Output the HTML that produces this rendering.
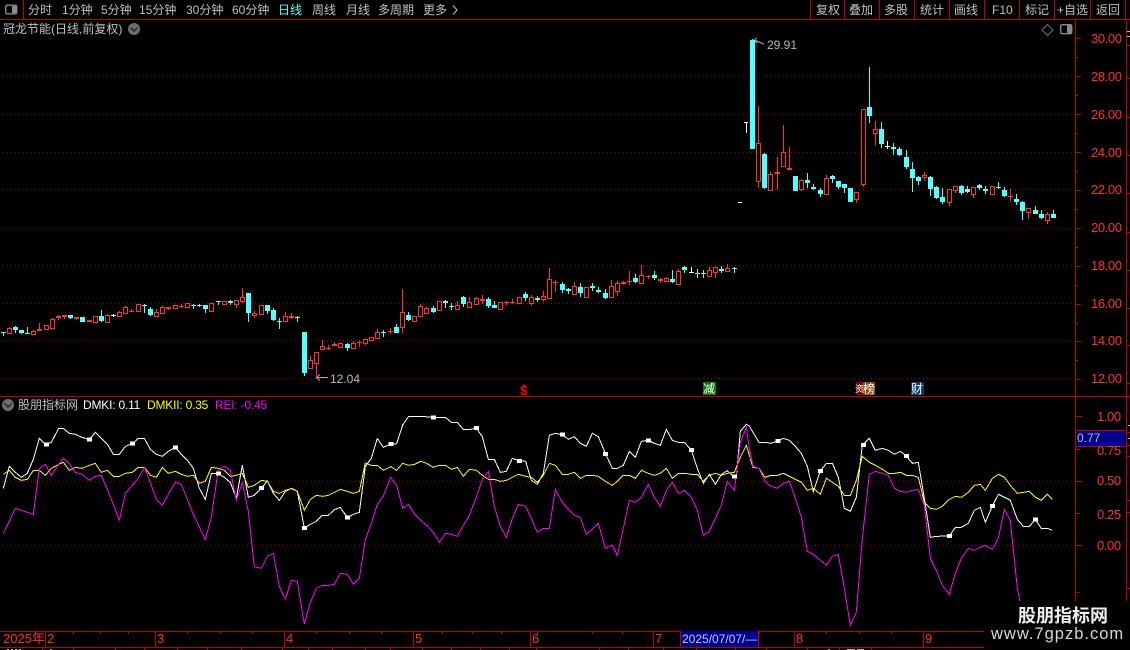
<!DOCTYPE html>
<html>
<head>
<meta charset="utf-8">
<style>
html,body{margin:0;padding:0;background:#000;width:1130px;height:650px;overflow:hidden}
#r{position:relative;width:1130px;height:650px;background:#000;overflow:hidden;font-family:"Liberation Sans","WenQuanYi Zen Hei","Noto Sans CJK SC",sans-serif;font-size:12px;color:#c0c0c0}
#r span.t{position:absolute;white-space:nowrap;line-height:14px;height:14px}
svg{position:absolute;left:0;top:0}
.a{color:#ff3232;font-size:13px;letter-spacing:-.4px}
.d{color:#ff3232;font-size:13px}
</style>
</head>
<body>
<div id="r">
<svg id="s" width="1130" height="650" viewBox="0 0 1130 650">
<g stroke="#a50000" stroke-width="1" fill="none" stroke-dasharray="1 3" shape-rendering="crispEdges">
<path d="M3 76.5H1074M3 114.5H1074M3 152.5H1074M3 189.5H1074M3 228.5H1074M3 265.5H1074M3 303.5H1074M3 340.5H1074M3 378.5H1074M3 481.5H1074M3 545.5H1074"/>
</g>
<g stroke="#c00000" stroke-width="1" fill="none" shape-rendering="crispEdges">
<path d="M0 19.5H1130M23.5 0V19M810.5 0V19M844.5 0V19M879.5 0V19M914.5 0V19M949.5 0V19M984.5 0V19M1019.5 0V19M1054.5 0V19M1090.5 0V19M1125.5 0V19"/>
<path d="M0 396.5H1130M1075.5 20V650M1126.5 20V650"/>
<path d="M1075 38.5h6M1075 57.5h3M1075 76.5h6M1075 95.5h3M1075 114.5h6M1075 133.5h3M1075 152.5h6M1075 171.5h3M1075 190.5h6M1075 209.5h3M1075 228.5h6M1075 247.5h3M1075 266.5h6M1075 285.5h3M1075 304.5h6M1075 323.5h3M1075 341.5h6M1075 360.5h3M1075 379.5h6"/>
<path d="M1076 416.5h6M1076 449.5h4M1076 481.5h6M1076 513.5h4M1076 545.5h6M1076 592.5h4"/>
<path d="M1126 45.5h4M1126 78.5h4M1126 117.5h4M1126 155.5h4M1126 193.5h4M1126 232.5h4M1126 270.5h4M1126 308.5h4M1126 345.5h4M1126 383.5h4M1126 432.5h4M1126 445.5h4M1126 456.5h4M1126 500.5h4M1126 512.5h4M1126 588.5h4"/>
<path d="M0 631.5H984M0 647.5H984M45.5 631V647M155.5 631V647M284.5 631V647M413.5 631V647M530.5 631V647M653.5 631V647M794.5 631V647M923.5 631V647"/>
<path d="M73.5 631v3M100.5 631v3M128.5 631v3M187.5 631v3M220.5 631v3M252.5 631v3M316.5 631v3M349.5 631v3M381.5 631v3M442.5 631v3M472.5 631v3M501.5 631v3M537.5 631v3M592.5 631v3M622.5 631v3M759.5 631v3M826.5 631v3M859.5 631v3M891.5 631v3"/>
<path d="M42.5 647v3M73.5 647v3M115.5 647v3M144.5 647v3M177.5 647v3M207.5 647v3M241.5 647v3M282.5 647v3M308.5 647v3M332.5 647v3M365.5 647v3M390.5 647v3M422.5 647v3M451.5 647v3M480.5 647v3M509.5 647v3M536.5 647v3M599.5 647v3M628.5 647v3M663.5 647v3M696.5 647v3M735.5 647v3M766.5 647v3M807.5 647v3M839.5 647v3M871.5 647v3"/>
</g>
<g fill="#bbb" shape-rendering="crispEdges">
<rect x="1127" y="31" width="3" height="1"/><rect x="1127" y="36" width="3" height="1"/>
<rect x="1128" y="425" width="2" height="1"/><rect x="1128" y="438" width="2" height="1"/>
<rect x="7" y="649" width="2" height="1"/><rect x="11" y="649" width="2" height="1"/><rect x="15" y="649" width="2" height="1"/><rect x="19" y="649" width="2" height="1"/><rect x="50" y="649" width="2" height="1"/><rect x="828" y="649" width="2" height="1"/><rect x="847" y="649" width="8" height="1"/><rect x="857" y="649" width="7" height="1"/>
</g>
<!-- panel icons -->
<g fill="none" stroke="#8a8a8a" stroke-width="1.4">
<rect x="5.7" y="5.2" width="11" height="8.6" rx="1.5"/>
<rect x="1060.7" y="24.7" width="11" height="9" rx="1.5"/>
</g>
<rect x="12" y="6" width="4" height="7" fill="#8a8a8a"/>
<rect x="1067" y="25.5" width="4" height="7.5" fill="#8a8a8a"/>
<path d="M1047.5 24.5L1053 30L1047.5 35.5L1042 30Z" fill="none" stroke="#777" stroke-width="1"/>
<circle cx="134" cy="29" r="6" fill="#6e6e6e"/><path d="M130.5 27.5L134 31L137.5 27.5" fill="none" stroke="#222" stroke-width="1.4"/>
<circle cx="8" cy="405" r="6" fill="#6e6e6e"/><path d="M4.5 403.5L8 407L11.5 403.5" fill="none" stroke="#222" stroke-width="1.4"/>
<path d="M453 5.5L457 10L453 14.5" fill="none" stroke="#c0c0c0" stroke-width="1"/>
<!-- price annotation arrows -->
<path d="M754 40L764 44M754 40l3 -2M754 40l3 3" fill="none" stroke="#b0b0b0" stroke-width="1"/>
<path d="M316 377.5H328M316 377.5l4 -3M316 377.5l4 3" fill="none" stroke="#b0b0b0" stroke-width="1"/>
<rect x="744" y="122" width="4" height="1" fill="#fff"/><rect x="746" y="122" width="1" height="11" fill="#fff"/>
<rect x="738" y="202" width="4" height="1" fill="#fff"/>
<g id="c"></g>
<!-- indicators -->
<g fill="none" stroke-width="1" shape-rendering="crispEdges">
<g transform="translate(0,395) scale(.33333)">
<polyline vector-effect="non-scaling-stroke" stroke="#fff" points="10,280 28,214 46,232 64,247 82,235 100,193 118,130 136,148 154,142 176,100 190,100 208,115 226,118 246,127 268,134 286,112 304,130 322,148 340,178 358,178 376,154 397,146 415,130 433,130 451,163 469,178 487,184 505,169 526,157 544,178 562,196 580,220 598,280 616,313 634,235 655,236 673,247 691,262 709,310 727,211 745,307 763,301 784,280 802,258 820,295 838,316 856,289 874,280 892,289 913,399 931,388 949,379 967,361 985,361 1003,344 1021,337 1042,368 1060,358 1078,352 1096,214 1114,190 1132,130"/>
<polyline vector-effect="non-scaling-stroke" stroke="#ffff00" points="10,238 28,226 46,247 64,256 82,253 100,226 118,226 136,241 154,220 176,208 190,202 208,226 226,217 246,220 268,211 286,205 304,232 322,226 340,244 358,244 376,235 397,232 415,217 433,217 451,241 469,247 487,217 505,235 526,229 544,238 562,244 580,241 598,265 616,259 634,217 655,220 673,226 691,244 709,241 727,235 745,277 763,271 784,256 802,259 820,289 838,295 856,286 874,281 892,289 913,346 931,313 949,301 967,304 985,301 1003,292 1021,283 1042,289 1060,295 1078,289 1096,204 1114,211 1132,211"/>
<polyline vector-effect="non-scaling-stroke" stroke="#ff00ff" points="10,415 28,378 46,340 64,346 82,352 100,358 118,220 136,208 154,241 176,208 190,190 208,205 226,232 246,238 268,256 286,244 304,241 322,283 340,328 358,376 376,295 397,271 415,250 433,217 451,262 469,313 487,331 505,298 526,262 544,268 562,313 580,358 598,396 616,433 634,367 655,223 673,214 691,226 709,316 727,262 745,349 763,515 784,520 802,484 820,475 838,574 856,613 874,556 892,559 913,687 931,622 949,580 967,571 985,571 1003,568 1021,535 1042,538 1060,568 1078,550 1096,433 1114,385 1132,328"/>
<g fill="#fff" stroke="none"><rect x="132" y="143" width="15" height="12"/><rect x="261" y="128" width="15" height="12"/><rect x="390" y="140" width="15" height="12"/><rect x="519" y="151" width="15" height="12"/><rect x="648" y="230" width="15" height="12"/><rect x="777" y="273" width="15" height="12"/><rect x="906" y="393" width="15" height="12"/><rect x="1035" y="362" width="15" height="12"/></g>
</g>
<g transform="translate(370,400) scale(.33333)">
<polyline vector-effect="non-scaling-stroke" stroke="#fff" points="22,115 40,142 58,134 80,131 98,75 116,49 134,49 152,49 190,52 226,52 244,67 262,67 280,88 302,88 319,84 337,110 355,178 373,178 391,217 409,214 427,175 445,182 467,184 484,241 502,253 520,220 538,106 556,100 577,104 595,118 613,110 631,130 649,139 667,100 685,110 706,160 727,205 742,205 760,196 778,154 796,172 814,124 835,121 853,130 871,136 889,88 907,121 925,127 943,127 964,150 982,205 1000,250 1018,223 1036,253 1054,223 1072,212 1093,232 1099,232 1111,94 1129,73 1140,79"/>
<polyline vector-effect="non-scaling-stroke" stroke="#ffff00" points="22,196 40,211 62,200 80,211 98,190 116,196 134,193 152,184 170,190 190,202 208,196 226,196 244,208 262,202 280,229 298,208 319,211 337,226 355,238 373,238 391,244 409,241 427,232 445,223 467,229 484,232 502,247 520,226 538,190 556,196 577,223 595,223 613,217 631,235 649,226 667,226 685,229 706,244 727,256 742,244 760,226 778,226 796,235 814,211 835,220 853,226 871,220 889,205 907,235 925,220 943,220 964,223 982,223 1000,244 1018,226 1036,220 1054,226 1072,220 1093,217 1111,172 1129,136 1140,172"/>
<polyline vector-effect="non-scaling-stroke" stroke="#ff00ff" points="22,313 40,288 62,232 80,256 98,325 116,313 134,343 152,361 170,376 190,397 208,427 226,400 244,403 262,409 280,376 298,346 319,292 337,238 355,214 373,319 391,379 409,412 427,355 445,313 467,319 484,355 502,397 520,385 538,385 556,268 577,307 595,328 613,346 631,352 649,403 667,388 685,370 706,445 727,436 742,466 760,385 778,301 796,307 814,292 835,253 853,292 871,319 889,271 907,247 925,280 943,271 964,292 982,331 1000,406 1018,394 1036,355 1054,316 1072,244 1093,271 1111,127 1129,82 1140,160"/>
<g fill="#fff" stroke="none"><rect x="55" y="126" width="15" height="12"/><rect x="183" y="46" width="15" height="12"/><rect x="312" y="78" width="15" height="12"/><rect x="441" y="177" width="15" height="12"/><rect x="570" y="98" width="15" height="12"/><rect x="699" y="156" width="15" height="12"/><rect x="828" y="116" width="15" height="12"/><rect x="957" y="144" width="15" height="12"/><rect x="1086" y="224" width="15" height="12"/></g>
</g>
<g transform="translate(750,395) scale(.33333)">
<polyline vector-effect="non-scaling-stroke" stroke="#fff" points="0,97 27,142 45,142 63,145 83,138 100,130 118,136 136,154 154,175 172,214 190,290 211,228 229,205 247,205 265,247 283,340 301,349 319,307 337,150 358,130 376,166 397,160 415,166 433,178 451,169 469,183 487,205 505,202 523,310 541,427 559,424 598,423 616,397 634,397 655,385 673,346 691,337 706,382 727,333 745,298 763,307 781,316 802,373 820,394 838,394 856,373 874,400 892,400 907,406"/>
<polyline vector-effect="non-scaling-stroke" stroke="#ffff00" points="0,190 9,217 27,220 45,247 63,241 83,241 100,235 118,244 136,253 154,262 172,286 190,280 211,298 229,250 247,262 265,274 283,301 301,301 319,256 337,184 358,202 376,211 397,223 415,235 433,235 451,232 469,241 487,241 505,247 523,322 541,340 559,343 577,334 598,313 616,304 634,307 655,292 673,271 691,268 706,286 727,250 745,238 763,247 781,271 802,295 820,292 838,289 856,307 874,316 892,298 907,313"/>
<polyline vector-effect="non-scaling-stroke" stroke="#ff00ff" points="0,166 9,214 27,220 45,259 63,274 83,280 100,265 118,259 136,310 154,367 172,469 190,478 229,511 247,484 265,478 283,580 301,691 319,652 337,430 358,238 376,229 397,235 415,241 433,280 451,289 469,292 487,286 505,283 523,331 541,490 559,526 577,571 598,598 616,535 634,490 655,460 673,466 691,457 706,451 727,463 745,430 763,343 781,376 802,580 810,620"/>
<g fill="#fff" stroke="none"><rect x="76" y="132" width="15" height="12"/><rect x="204" y="222" width="15" height="12"/><rect x="333" y="144" width="15" height="12"/><rect x="462" y="177" width="15" height="12"/><rect x="591" y="417" width="15" height="12"/><rect x="720" y="327" width="15" height="12"/><rect x="849" y="367" width="15" height="12"/></g>
</g>
</g>
<!-- small signal badges -->
<rect x="703" y="382" width="13" height="13" fill="#0a7a0a"/>
<rect x="856" y="382" width="7" height="13" fill="#7a0a0a"/>
<rect x="863" y="382" width="12" height="13" fill="#8a4a0a"/>
<rect x="911" y="382" width="13" height="13" fill="#0a3a70"/>
<path d="M524 384l2.5 3h-5z" fill="#ff0000"/>
<rect x="680" y="631" width="79" height="16" fill="#000090"/>
<path d="M680.5 631V647M758.5 631V647" stroke="#c00000" fill="none"/>
<rect x="1077" y="430" width="48" height="16" fill="#00008b"/>
<path d="M1076 430.5H1126M1076 446.5H1126" stroke="#c00000" fill="none"/>
<!-- watermark -->
<rect x="984" y="601" width="146" height="49" fill="#000"/>
</svg>

<span class="t" style="left:28px;top:3px">分时</span>
<span class="t" style="left:62px;top:3px">1分钟</span>
<span class="t" style="left:101px;top:3px">5分钟</span>
<span class="t" style="left:139px;top:3px">15分钟</span>
<span class="t" style="left:186px;top:3px">30分钟</span>
<span class="t" style="left:232px;top:3px">60分钟</span>
<span class="t" style="left:278px;top:3px;color:#54ffff">日线</span>
<span class="t" style="left:312px;top:3px">周线</span>
<span class="t" style="left:346px;top:3px">月线</span>
<span class="t" style="left:378px;top:3px">多周期</span>
<span class="t" style="left:423px;top:3px">更多</span>

<span class="t" style="left:816px;top:3px">复权</span>
<span class="t" style="left:849px;top:3px">叠加</span>
<span class="t" style="left:884px;top:3px">多股</span>
<span class="t" style="left:920px;top:3px">统计</span>
<span class="t" style="left:954px;top:3px">画线</span>
<span class="t" style="left:992px;top:3px">F10</span>
<span class="t" style="left:1025px;top:3px">标记</span>
<span class="t" style="left:1057px;top:3px">+自选</span>
<span class="t" style="left:1096px;top:3px">返回</span>

<span class="t" style="left:3px;top:22px">冠龙节能(日线,前复权)</span>

<span class="t" style="left:767px;top:38px;font-size:12px;color:#b8b8b8">29.91</span>
<span class="t" style="left:330px;top:372px;font-size:12px;color:#b8b8b8">12.04</span>

<span class="t a" style="left:1091px;top:32px">30.00</span>
<span class="t a" style="left:1091px;top:70px">28.00</span>
<span class="t a" style="left:1091px;top:108px">26.00</span>
<span class="t a" style="left:1091px;top:146px">24.00</span>
<span class="t a" style="left:1091px;top:183px">22.00</span>
<span class="t a" style="left:1091px;top:221px">20.00</span>
<span class="t a" style="left:1091px;top:259px">18.00</span>
<span class="t a" style="left:1091px;top:297px">16.00</span>
<span class="t a" style="left:1091px;top:334px">14.00</span>
<span class="t a" style="left:1091px;top:372px">12.00</span>

<span class="t a" style="left:1097px;top:410px">1.00</span>
<span class="t a" style="left:1097px;top:444px">0.75</span>
<span class="t a" style="left:1097px;top:474px">0.50</span>
<span class="t a" style="left:1097px;top:508px">0.25</span>
<span class="t a" style="left:1097px;top:539px">0.00</span>
<span class="t" style="left:1077px;top:431px;color:#b8b8e0">0.77</span>

<span class="t" style="left:18px;top:398px">股朋指标网</span>
<span class="t" style="left:83px;top:398px;color:#fff;letter-spacing:-.2px">DMKI: 0.11</span>
<span class="t" style="left:147px;top:398px;color:#ffff00;letter-spacing:-.2px">DMKII: 0.35</span>
<span class="t" style="left:215px;top:398px;color:#ff00ff;letter-spacing:-.2px">REI: -0.45</span>

<span class="t" style="left:520px;top:384px;color:#ff0000;font-weight:bold;font-size:13px">$</span>
<span class="t" style="left:703px;top:382px;color:#fff;font-size:12px">减</span>
<span class="t" style="left:855px;top:382px;color:#fff;font-size:9px">资</span>
<span class="t" style="left:863px;top:382px;color:#fff;font-size:12px">榜</span>
<span class="t" style="left:911px;top:382px;color:#fff;font-size:12px">财</span>

<span class="t d" style="left:3px;top:632px">2025年</span>
<span class="t d" style="left:47px;top:632px">2</span>
<span class="t d" style="left:157px;top:632px">3</span>
<span class="t d" style="left:286px;top:632px">4</span>
<span class="t d" style="left:415px;top:632px">5</span>
<span class="t d" style="left:532px;top:632px">6</span>
<span class="t d" style="left:655px;top:632px">7</span>
<span class="t d" style="left:796px;top:632px">8</span>
<span class="t d" style="left:925px;top:632px">9</span>
<span class="t" style="left:682px;top:632px;color:#c8c8f0">2025/07/07/—</span>

<span class="t" style="left:1018px;top:604px;height:22px;line-height:22px;font-size:18px;font-weight:bold;color:#f0f0f0;font-family:'Noto Sans CJK SC',sans-serif">股朋指标网</span>
<span class="t" style="left:991px;top:625px;height:18px;line-height:18px;font-size:16.5px;letter-spacing:1px;color:#d8d8d8">www.7gpzb.com</span>
</div>
<script>
var L=[
[0,280,[
[10,155,157,160,167,'c'],[28,141,145,158,161,'r'],[46,139,141,150,159,'c'],[64,150,150,159,162,'c'],[82,141,158,160,162,'c'],[100,150,154,161,164,'r'],[118,128,148,152,154,'R'],[139,135,136,146,147,'r'],[157,115,117,143,144,'r'],[175,104,107,113,120,'R'],[193,104,105,110,116,'R'],[211,105,105,113,117,'c'],[229,111,112,117,120,'R'],[247,111,111,125,126,'c'],[268,120,120,125,126,'R'],[286,108,108,125,126,'r'],[304,90,108,122,126,'c'],[322,101,105,125,129,'r'],[340,102,105,107,111,'w'],[358,92,96,107,111,'r'],[376,78,81,98,100,'r'],[394,88,93,94,95,'R'],[415,71,72,92,93,'r'],[433,71,75,79,99,'c'],[451,82,87,105,108,'c'],[469,87,97,107,109,'r'],[487,78,81,99,102,'r'],[505,81,82,87,90,'R'],[526,75,76,83,85,'r'],[543,73,77,80,84,'R'],[562,70,70,80,81,'r'],[579,71,74,77,88,'c'],[597,71,74,77,81,'c'],[616,75,75,87,99,'c'],[634,68,70,93,94,'r'],[654,63,63,66,74,'c'],[673,64,64,71,72,'r'],[691,60,64,70,75,'c'],[709,61,61,71,84,'r'],[727,24,52,63,69,'r'],[745,39,39,98,126,'c'],[763,92,100,106,114,'r'],[784,75,76,102,104,'r'],[802,76,76,93,102,'c'],[820,85,90,120,122,'c'],[838,115,122,127,147,'c'],[856,97,108,122,124,'r'],[874,100,108,113,117,'R'],[892,108,110,113,126,'c'],[913,156,156,278,288,'c'],[931,228,241,263,265,'r'],[949,216,216,250,295,'r'],[967,180,198,206,208,'r'],[985,195,203,208,209,'R'],[1003,186,191,197,198,'R'],[1021,190,190,200,201,'r'],[1042,190,192,204,212,'c'],[1060,182,189,204,206,'r'],[1078,182,185,190,200,'R'],[1096,176,178,189,194,'r']
]],
[370,260,[
[3,232,232,240,240,'r'],[22,208,217,233,233,'r'],[40,210,216,218,231,'c'],[60,204,212,214,222,'R'],[79,193,202,218,218,'c'],[97,87,157,200,219,'r'],[115,157,165,180,183,'c'],[133,168,169,182,183,'r'],[151,133,138,167,168,'r'],[169,140,145,158,159,'r'],[190,138,144,156,159,'c'],[208,124,124,151,152,'r'],[226,120,123,129,144,'c'],[244,130,139,141,150,'c'],[262,124,136,147,149,'r'],[280,108,111,132,141,'c'],[298,111,127,140,143,'r'],[319,112,115,131,134,'r'],[337,105,117,123,131,'R'],[355,111,117,137,144,'c'],[373,124,135,144,145,'c'],[391,127,127,146,147,'r'],[408,123,127,129,136,'R'],[426,117,126,129,131,'R'],[448,112,112,129,132,'r'],[466,96,102,114,123,'c'],[484,105,112,128,137,'r'],[502,109,113,120,126,'c'],[520,94,109,116,125,'r'],[538,24,58,113,114,'r'],[555,60,67,70,96,'R'],[577,66,72,90,99,'c'],[595,83,87,94,102,'c'],[613,67,79,101,102,'r'],[631,69,81,99,111,'c'],[649,80,82,110,111,'r'],[667,70,77,85,93,'c'],[685,82,89,96,100,'c'],[706,87,99,113,117,'c'],[724,60,79,110,114,'r'],[742,63,70,92,107,'r'],[760,63,67,71,75,'R'],[778,33,64,66,74,'R'],[796,42,54,66,68,'c'],[814,16,46,68,69,'r'],[835,44,47,50,57,'R'],[853,33,45,53,60,'c'],[871,53,57,63,69,'R'],[889,52,55,62,63,'r'],[907,30,57,66,69,'c'],[925,26,34,71,75,'r'],[943,17,22,29,39,'c'],[963,22,35,36,37,'w'],[982,27,38,41,53,'c'],[1000,30,40,42,54,'c'],[1018,22,31,47,48,'r'],[1036,22,22,36,54,'r'],[1054,18,27,33,39,'c'],[1072,12,25,32,36,'r'],[1093,20,25,27,39,'c']
]],
[730,30,[
[67,27,30,357,357,'c'],[85,228,340,452,474,'r'],[103,368,372,475,477,'c'],[121,427,433,479,479,'r'],[142,381,427,431,480,'R'],[160,286,367,407,408,'r'],[178,351,414,419,419,'R'],[196,438,438,483,483,'c'],[214,448,451,477,483,'r'],[232,430,450,459,474,'c'],[250,463,471,477,480,'c'],[271,475,480,492,500,'c'],[289,436,445,492,495,'r'],[307,435,439,446,458,'c'],[325,453,453,471,477,'c'],[343,462,462,474,489,'c'],[361,474,474,516,516,'c'],[379,487,487,506,519,'r'],[400,237,237,461,471,'r'],[418,111,231,258,279,'c'],[436,273,298,308,348,'r'],[454,276,297,342,354,'c'],[472,334,347,350,357,'w'],[490,339,351,357,375,'c'],[508,351,357,375,378,'c'],[529,360,381,411,417,'c'],[547,396,417,444,486,'c'],[565,438,441,453,465,'c'],[583,426,435,442,453,'r'],[601,438,441,477,498,'c'],[619,468,471,504,507,'c'],[637,474,501,516,522,'c'],[658,477,477,516,528,'r'],[676,468,469,480,489,'r'],[694,465,468,489,495,'c'],[712,468,478,486,489,'c'],[730,471,472,492,504,'r'],[748,462,465,474,480,'c'],[766,468,477,483,492,'c'],[787,468,469,492,493,'r'],[805,456,471,474,478,'c'],[823,471,480,498,501,'c'],[841,477,498,502,513,'R'],[859,492,507,516,525,'c'],[877,513,516,543,570,'c'],[895,534,535,545,567,'r'],[916,528,540,552,553,'c'],[934,540,552,565,567,'c'],[952,546,552,570,582,'r'],[970,540,552,564,565,'c']
]]];
var col={r:'#ff3232',R:'#ff3232',c:'#54ffff',w:'#ffffff'},h='';
L.forEach(function(g){g[2].forEach(function(k){
var x=Math.floor(g[0]+k[0]/3),Y=function(v){return Math.round(g[1]+v/3)};
var hi=Y(k[1]),t=Y(k[2]),b=Y(k[3]),lo=Y(k[4]),c=col[k[5]];
h+='<rect x="'+x+'" y="'+hi+'" width="1" height="'+Math.max(lo-hi,1)+'" fill="'+c+'"/>';
if(k[5]=='r'){h+='<rect x="'+(x-2)+'" y="'+t+'" width="5" height="'+Math.max(b-t+1,2)+'" fill="#000"/><rect x="'+(x-1.5)+'" y="'+(t+.5)+'" width="4" height="'+Math.max(b-t,1)+'" fill="none" stroke="'+c+'"/>';}
else{h+='<rect x="'+(x-2)+'" y="'+t+'" width="5" height="'+Math.max(b-t,1)+'" fill="'+c+'"/>';}
});});
var e=document.getElementById('c');e.setAttribute('shape-rendering','crispEdges');e.innerHTML=h;
</script>
</body>
</html>
